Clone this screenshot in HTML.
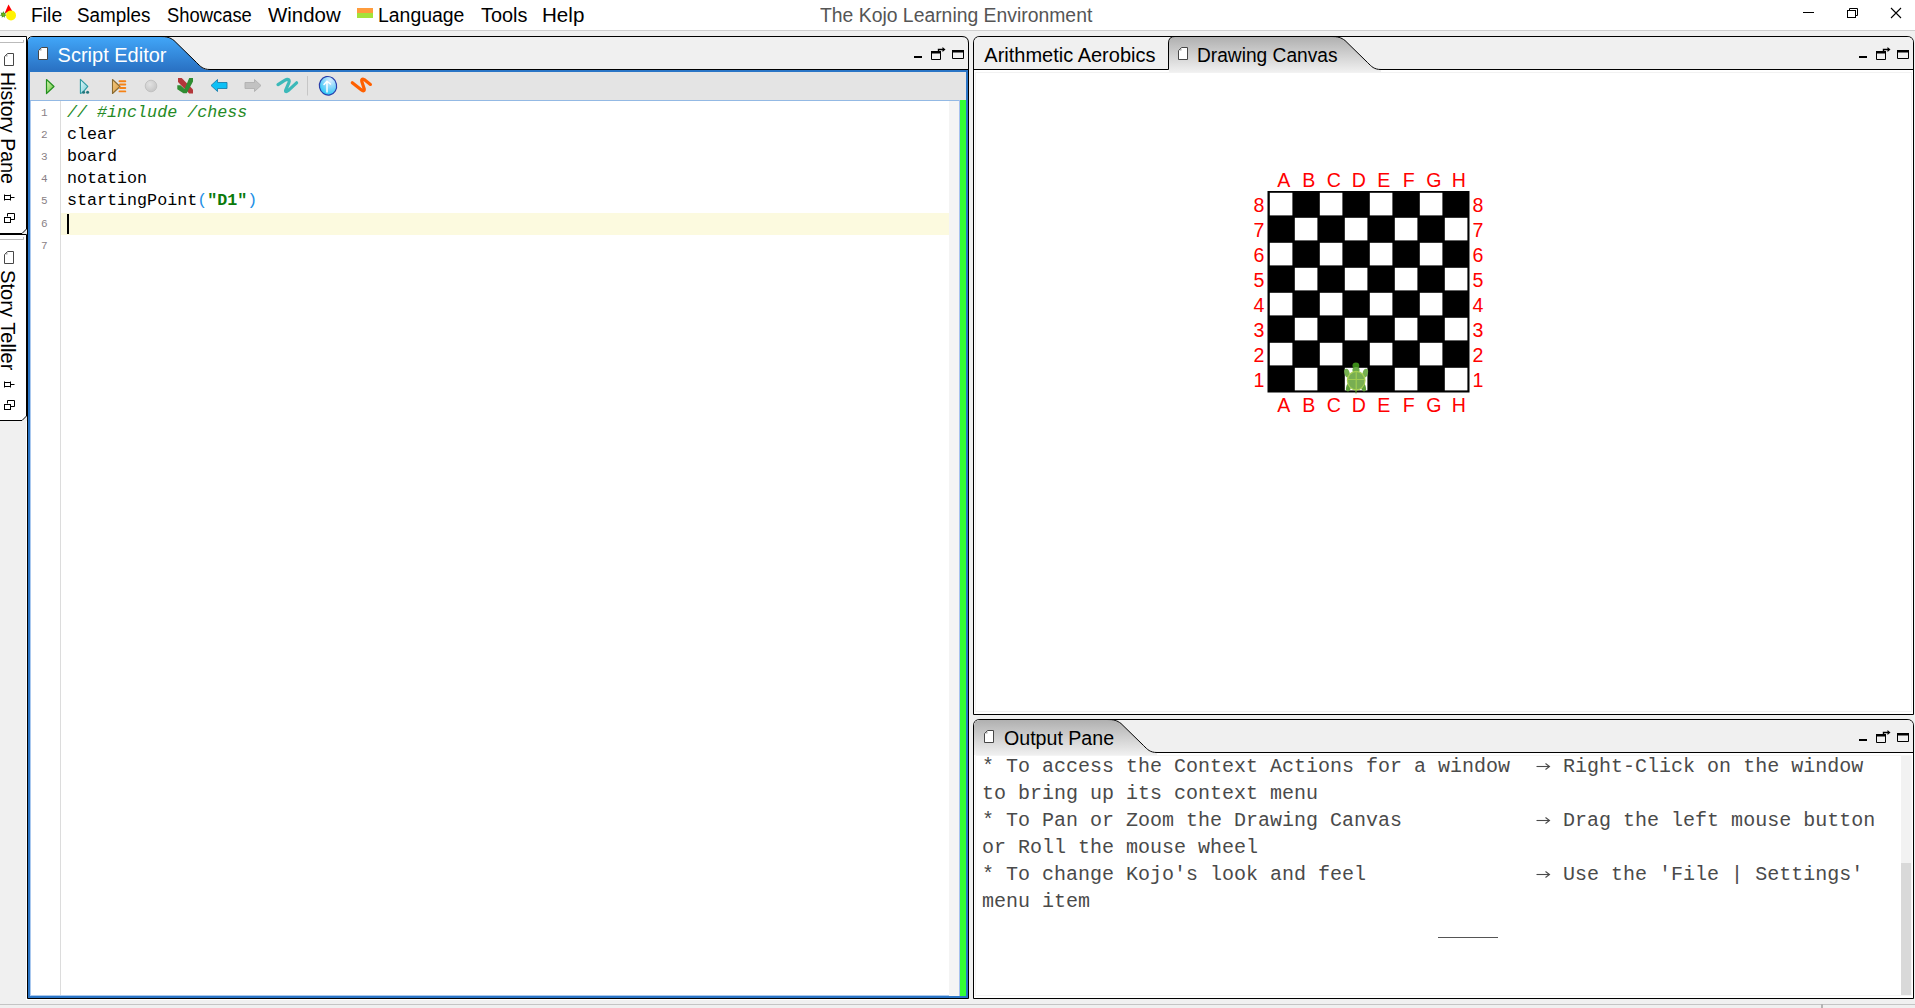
<!DOCTYPE html>
<html><head><meta charset="utf-8">
<style>
*{margin:0;padding:0;box-sizing:border-box}
html,body{width:1915px;height:1008px;overflow:hidden;background:#f0f0f0;font-family:"Liberation Sans",sans-serif;position:relative}
.a{position:absolute}
.t{position:absolute;white-space:pre;line-height:1}
.menu{font-size:20px;color:#000;top:4.8px;transform-origin:0 0}
.mono{font-family:"Liberation Mono",monospace}
.code{position:absolute;left:67px;font-family:"Liberation Mono",monospace;font-size:16.7px;white-space:pre;line-height:1;color:#000}
.ln{position:absolute;font-family:"Liberation Mono",monospace;font-size:11px;color:#8a7f86;line-height:1}
.out{position:absolute;left:982px;font-family:"Liberation Mono",monospace;font-size:20px;white-space:pre;line-height:1;color:#4a4a4a}
.arr{display:inline-block;position:relative;width:17px;height:20px;vertical-align:top}
.rot{position:absolute;transform-origin:0 0;transform:rotate(90deg);white-space:pre;line-height:1;font-size:20px;color:#000}
</style></head>
<body>
<!-- title/menu bar -->
<div class="a" style="left:0;top:0;width:1915px;height:30px;background:#fff"></div>
<div class="a" style="left:0;top:30px;width:1915px;height:1px;background:#cfcfcf"></div>
<svg class="a" style="left:0;top:0" width="18" height="24">
<polygon points="8.5,4.6 12.2,11 4.6,13.2" fill="#f00"/>
<polygon points="3.30,11.10 4.12,12.89 6.04,12.42 5.15,14.18 6.71,15.38 4.79,15.78 4.82,17.75 3.30,16.50 1.78,17.75 1.81,15.78 -0.11,15.38 1.45,14.18 0.56,12.42 2.48,12.89" fill="#3c961c"/>
<circle cx="3.4" cy="14.6" r="1.4" fill="#7ab80c"/>
<circle cx="11" cy="15.4" r="5" fill="#fff200"/>
</svg>
<div class="a" style="left:357px;top:8px;width:16px;height:5px;background:#ff9c3c"></div>
<div class="a" style="left:357px;top:13px;width:16px;height:5px;background:#a4e23a"></div>
<div class="t menu" style="left:31.4px;transform:scaleX(0.966)">File</div>
<div class="t menu" style="left:77.4px;transform:scaleX(0.943)">Samples</div>
<div class="t menu" style="left:166.7px;transform:scaleX(0.919)">Showcase</div>
<div class="t menu" style="left:268.1px;transform:scaleX(1.021)">Window</div>
<div class="t menu" style="left:377.9px;transform:scaleX(0.971)">Language</div>
<div class="t menu" style="left:481px;transform:scaleX(0.993)">Tools</div>
<div class="t menu" style="left:542.2px;transform:scaleX(1.029)">Help</div>
<div class="t menu" style="left:819.8px;color:#555;transform:scaleX(0.968)">The Kojo Learning Environment</div>
<!-- window controls -->
<svg class="a" style="left:1790px;top:0" width="125" height="30">
<line x1="13" y1="12.5" x2="24" y2="12.5" stroke="#000" stroke-width="1"/>
<rect x="57.5" y="10.5" width="8" height="7" fill="none" stroke="#000"/>
<path d="M59.5 10.5 V8.5 H67.5 V15.5 H65.5" fill="none" stroke="#000"/>
<path d="M101 8 L111 18 M111 8 L101 18" stroke="#000" stroke-width="1.1"/>
</svg>

<!-- ============ shapes layer ============ -->
<svg class="a" style="left:0;top:0" width="1915" height="1008">
<defs>
<linearGradient id="blue" gradientUnits="userSpaceOnUse" x1="0" y1="37" x2="0" y2="70">
<stop offset="0" stop-color="#41a6f8"/><stop offset="1" stop-color="#2a72c4"/>
</linearGradient>
<linearGradient id="grey" x1="0" y1="0" x2="0" y2="1">
<stop offset="0" stop-color="#b0b0b0"/><stop offset="1" stop-color="#f0f0f0"/>
</linearGradient>
</defs>
<!-- sidebar -->
<path d="M0 36 H27 V229 L22.5 233.5 H0 Z" fill="#fff"/><path d="M0 36.5 H26.5 V229 L22 233.5 H0" fill="none" stroke="#000" stroke-width="1"/>
<path d="M0 234 H27 V416 L22.5 420.5 H0 Z" fill="#fff"/><path d="M0 234.5 H26.5 V416 L22 420.5 H0" fill="none" stroke="#000" stroke-width="1"/>
<path d="M0 42.5 H23.5 V40" fill="none" stroke="#bbb"/>
<path d="M0 239.5 H23.5 V237" fill="none" stroke="#bbb"/>

<!-- script editor panel -->
<path d="M27.5 998.5 V42 Q27.5 36.5 33 36.5 H962 Q968.5 36.5 968.5 43 V998.5 Z" fill="#f0f0f0" stroke="#000" stroke-width="1"/>
<path d="M28 70 V42 Q28 37 33 37 L160 37 C167 37 170 37.5 174 40.5 L196.5 62.5 C200.5 66.5 203 70 210 70 H968 V998 H28 Z" fill="url(#blue)"/>
<path d="M160 36.5 C167 36.5 170 37.5 174 40.5 L196.5 62.5 C200.5 66.5 203 69.5 210 69.5 H968" fill="none" stroke="#000" stroke-width="1"/>
<rect x="28" y="70" width="940" height="928" fill="#2a75c6"/>
<rect x="30" y="72" width="936" height="28" fill="#e4e4e4"/>
<rect x="30" y="100" width="936" height="1" fill="#93b9e4"/>
<rect x="30" y="101" width="936" height="895" fill="#fff"/>
<rect x="60" y="101" width="1" height="895" fill="#dcdcdc"/>
<rect x="30" y="101" width="1" height="895" fill="#a9c8ee"/><rect x="30" y="995" width="930" height="1" fill="#a9c8ee"/>
<rect x="26" y="421" width="1" height="578" fill="#fff"/><rect x="26" y="999" width="944" height="1" fill="#fff"/>
<rect x="61" y="213" width="888" height="22" fill="#fcfadf"/>
<rect x="949" y="101" width="10" height="895" fill="#f4f4f4"/><rect x="959" y="100" width="1" height="896" fill="#a8c0ee"/>
<rect x="960" y="100" width="6" height="896" fill="#33ff33"/>

<!-- drawing canvas panel -->
<path d="M973.5 714.5 V43 Q973.5 36.5 980 36.5 H1907 Q1913.5 36.5 1913.5 43 V714.5 Z" fill="#fff" stroke="#000" stroke-width="1"/>
<path d="M974 69 V43 Q974 37 980 37 H1907 Q1913 37 1913 43 V69 Z" fill="#f0f0f0"/>
<path d="M1169 72 V43 Q1169 37 1175 37 L1331 37 C1338 37 1341 37.5 1345 40.5 L1367.5 62.5 C1371.5 66.5 1374 70 1381 70 V72 Z" fill="url(#grey)"/>
<path d="M974 69.5 H1168.5 V43 Q1168.5 36.5 1175 36.5 L1331 36.5 C1338 36.5 1341 37.5 1345 40.5 L1367.5 62.5 C1371.5 66.5 1374 69.5 1381 69.5 H1913" fill="none" stroke="#000" stroke-width="1"/>

<!-- output panel -->
<path d="M973.5 998.5 V726 Q973.5 719.5 980 719.5 H1907 Q1913.5 719.5 1913.5 726 V998.5 Z" fill="#fff" stroke="#000" stroke-width="1"/>
<path d="M974 752 V726 Q974 720 980 720 H1907 Q1913 720 1913 726 V752 Z" fill="#f0f0f0"/>
<path d="M974 755 V726 Q974 720 980 720 L1107 720 C1114 720 1117 720.5 1121 723.5 L1143.5 745.5 C1147.5 749.5 1150 753 1157 753 V755 Z" fill="url(#grey)"/>
<path d="M1107 719.5 C1114 719.5 1117 720.5 1121 723.5 L1143.5 745.5 C1147.5 749.5 1150 752.5 1157 752.5 H1913" fill="none" stroke="#000" stroke-width="1"/>
<rect x="1901" y="755" width="10" height="108" fill="#f2f2f2"/>
<rect x="1901" y="863" width="10" height="133" fill="#d9d9d9"/>

<rect x="975.5" y="72.5" width="936" height="639" fill="none" stroke="#f2f2f2"/>
<rect x="975.5" y="755.5" width="936" height="240" fill="none" stroke="#f4f4f4"/>
<!-- status bar -->
<rect x="0" y="1004" width="1915" height="1" fill="#c4c4c4"/>
<rect x="1821" y="1004" width="2" height="4" fill="#b4b4b4"/>
</svg>


<!-- ============ text & icons layer ============ -->
<svg class="a" style="left:0;top:0" width="400" height="100">
<defs>
<linearGradient id="gr1" x1="0" y1="0" x2="1" y2="1"><stop offset="0" stop-color="#dcf7b8"/><stop offset="1" stop-color="#5cc038"/></linearGradient>
<linearGradient id="tl1" x1="0" y1="0" x2="1" y2="1"><stop offset="0" stop-color="#e0f6f8"/><stop offset="1" stop-color="#7ccfd8"/></linearGradient>
<linearGradient id="or1" x1="0" y1="0" x2="1" y2="1"><stop offset="0" stop-color="#f6cc80"/><stop offset="1" stop-color="#d89a48"/></linearGradient>
<radialGradient id="bb1" cx="0.7" cy="0.25" r="0.9"><stop offset="0" stop-color="#d8ecff"/><stop offset="0.5" stop-color="#7ad4fa"/><stop offset="1" stop-color="#10c4f6"/></radialGradient>
<radialGradient id="st1" cx="0.4" cy="0.35" r="0.7"><stop offset="0" stop-color="#e2e2e2"/><stop offset="1" stop-color="#c4c4c4"/></radialGradient>
</defs>
<!-- run -->
<path d="M46.5 79.5 L54 86.5 L46.5 93.5 Z" fill="url(#gr1)" stroke="#23901e" stroke-width="1.2" stroke-linejoin="round"/>
<!-- run worksheet -->
<path d="M80.4 79.3 L87.8 86.3 L82.6 92.6 L80.4 93.4 Z" fill="url(#tl1)" stroke="#2a9aa2" stroke-width="1.1" stroke-linejoin="round"/>
<circle cx="83.6" cy="92.2" r="1.5" fill="#23767c"/><circle cx="87.6" cy="92.2" r="1.5" fill="#23767c"/>
<!-- trace -->
<path d="M112.5 79.5 L120 86.5 L112.5 93.5 Z" fill="url(#or1)" stroke="#8a6a30" stroke-width="1.1" stroke-linejoin="round"/>
<g stroke="#f58216" stroke-width="1.9" stroke-linecap="round"><path d="M119.5 81.2 H125.3 M120 84.5 H125.3 M120 88 H125.3 M119.5 91.4 H125.3"/></g>
<!-- stop -->
<circle cx="151" cy="86" r="5.8" fill="url(#st1)" stroke="#bdbdbd" stroke-width="0.8"/>
<!-- check/cross -->
<polygon points="178,78.1 181.7,78.1 193,89.5 193,93.5 189.2,93.5 178,82" fill="#b3363a"/>
<polygon points="177.3,85.2 180.5,85.2 184.6,89 189.2,78.1 193,78.1 193,81.5 186.7,93.3 183.4,93.3 177.3,89.2" fill="#2f8d32"/>
<!-- back arrow -->
<path d="M211 85.5 L217.5 79.5 V82.5 H227 V88.5 H217.5 V91.5 Z" fill="#0cc0f6" stroke="#1a7fae" stroke-width="0.9" stroke-linejoin="round"/>
<!-- fwd arrow -->
<path d="M261 85.5 L254.5 79.5 V82.5 H245 V88.5 H254.5 V91.5 Z" fill="#c2c2c2" stroke="#b0b0b0" stroke-width="0.9" stroke-linejoin="round"/>
<!-- teal squiggle -->
<path d="M278 84.6 C282 82 285.5 79.6 287.3 79.4 C289.3 79.3 289.6 80.8 288.8 82.8 L285.8 89.8 C285 91.8 286.2 92.2 288.2 90.6 L296.6 82.8" fill="none" stroke="#3cb9b9" stroke-width="3.2" stroke-linecap="round" stroke-linejoin="round"/>
<rect x="307" y="76" width="1" height="19.5" fill="#c6c6c6"/>
<!-- blue ball -->
<ellipse cx="328" cy="85.8" rx="8.6" ry="9.3" fill="url(#bb1)" stroke="#2a3eaa" stroke-width="1.2" transform="rotate(-12 328 85.8)"/>
<path d="M327 92 V81.5 M324 84.5 L327 81.2 L330.5 84" fill="none" stroke="#fff" stroke-width="1.5" stroke-linecap="round"/>
<!-- orange squiggle -->
<path d="M352.3 82.8 L361.2 89.8 C363.2 91.4 364.6 91 364.2 88.8 L361.8 81.6 C361.2 79.6 362.2 78.6 364.2 79.6 L370.4 84.4" fill="none" stroke="#ff6000" stroke-width="3.2" stroke-linecap="round" stroke-linejoin="round"/>
</svg>
<svg class="a" style="left:0;top:0" width="1915" height="1008">
<rect x="1267.5" y="191" width="202" height="201.5" fill="#000"/>
<rect x="1269.8" y="192.8" width="22.6" height="22.6" fill="#fff"/>
<rect x="1269.8" y="242.8" width="22.6" height="22.6" fill="#fff"/>
<rect x="1269.8" y="292.8" width="22.6" height="22.6" fill="#fff"/>
<rect x="1269.8" y="342.8" width="22.6" height="22.6" fill="#fff"/>
<rect x="1294.8" y="217.8" width="22.6" height="22.6" fill="#fff"/>
<rect x="1294.8" y="267.8" width="22.6" height="22.6" fill="#fff"/>
<rect x="1294.8" y="317.8" width="22.6" height="22.6" fill="#fff"/>
<rect x="1294.8" y="367.8" width="22.6" height="22.6" fill="#fff"/>
<rect x="1319.8" y="192.8" width="22.6" height="22.6" fill="#fff"/>
<rect x="1319.8" y="242.8" width="22.6" height="22.6" fill="#fff"/>
<rect x="1319.8" y="292.8" width="22.6" height="22.6" fill="#fff"/>
<rect x="1319.8" y="342.8" width="22.6" height="22.6" fill="#fff"/>
<rect x="1344.8" y="217.8" width="22.6" height="22.6" fill="#fff"/>
<rect x="1344.8" y="267.8" width="22.6" height="22.6" fill="#fff"/>
<rect x="1344.8" y="317.8" width="22.6" height="22.6" fill="#fff"/>
<rect x="1344.8" y="367.8" width="22.6" height="22.6" fill="#fff"/>
<rect x="1369.8" y="192.8" width="22.6" height="22.6" fill="#fff"/>
<rect x="1369.8" y="242.8" width="22.6" height="22.6" fill="#fff"/>
<rect x="1369.8" y="292.8" width="22.6" height="22.6" fill="#fff"/>
<rect x="1369.8" y="342.8" width="22.6" height="22.6" fill="#fff"/>
<rect x="1394.8" y="217.8" width="22.6" height="22.6" fill="#fff"/>
<rect x="1394.8" y="267.8" width="22.6" height="22.6" fill="#fff"/>
<rect x="1394.8" y="317.8" width="22.6" height="22.6" fill="#fff"/>
<rect x="1394.8" y="367.8" width="22.6" height="22.6" fill="#fff"/>
<rect x="1419.8" y="192.8" width="22.6" height="22.6" fill="#fff"/>
<rect x="1419.8" y="242.8" width="22.6" height="22.6" fill="#fff"/>
<rect x="1419.8" y="292.8" width="22.6" height="22.6" fill="#fff"/>
<rect x="1419.8" y="342.8" width="22.6" height="22.6" fill="#fff"/>
<rect x="1444.8" y="217.8" width="22.6" height="22.6" fill="#fff"/>
<rect x="1444.8" y="267.8" width="22.6" height="22.6" fill="#fff"/>
<rect x="1444.8" y="317.8" width="22.6" height="22.6" fill="#fff"/>
<rect x="1444.8" y="367.8" width="22.6" height="22.6" fill="#fff"/>
<g font-family="Liberation Sans" font-size="19.6" fill="#f00" text-anchor="middle">
<text x="1283.8" y="186.8">A</text>
<text x="1283.8" y="412">A</text>
<text x="1308.8" y="186.8">B</text>
<text x="1308.8" y="412">B</text>
<text x="1333.8" y="186.8">C</text>
<text x="1333.8" y="412">C</text>
<text x="1358.8" y="186.8">D</text>
<text x="1358.8" y="412">D</text>
<text x="1383.8" y="186.8">E</text>
<text x="1383.8" y="412">E</text>
<text x="1408.8" y="186.8">F</text>
<text x="1408.8" y="412">F</text>
<text x="1433.8" y="186.8">G</text>
<text x="1433.8" y="412">G</text>
<text x="1458.8" y="186.8">H</text>
<text x="1458.8" y="412">H</text>
<text x="1259" y="212.1">8</text>
<text x="1478" y="212.1">8</text>
<text x="1259" y="237.1">7</text>
<text x="1478" y="237.1">7</text>
<text x="1259" y="262.1">6</text>
<text x="1478" y="262.1">6</text>
<text x="1259" y="287.1">5</text>
<text x="1478" y="287.1">5</text>
<text x="1259" y="312.1">4</text>
<text x="1478" y="312.1">4</text>
<text x="1259" y="337.1">3</text>
<text x="1478" y="337.1">3</text>
<text x="1259" y="362.1">2</text>
<text x="1478" y="362.1">2</text>
<text x="1259" y="387.1">1</text>
<text x="1478" y="387.1">1</text>
</g>
<g>
<ellipse cx="1355.9" cy="365.6" rx="3.4" ry="3.2" fill="#3b8a18"/>
<ellipse cx="1356" cy="370" rx="3.6" ry="3" fill="#6aaa48"/>
<ellipse cx="1347" cy="373" rx="2.6" ry="4.4" fill="#76b050" transform="rotate(-15 1347 373)"/>
<ellipse cx="1365.3" cy="373" rx="2.6" ry="4.4" fill="#76b050" transform="rotate(15 1365.3 373)"/>
<ellipse cx="1348.5" cy="387.5" rx="2.4" ry="4" fill="#5e9e3a" transform="rotate(15 1348.5 387.5)"/>
<ellipse cx="1363.5" cy="387.5" rx="2.4" ry="4" fill="#5e9e3a" transform="rotate(-15 1363.5 387.5)"/>
<path d="M1355 390 L1357 390 L1356 394.5 Z" fill="#4a9020"/>
<ellipse cx="1356.2" cy="380.6" rx="8.8" ry="9.3" fill="#78ae52" stroke="#a6cf52" stroke-width="1.2"/>
<path d="M1356.2 372 V389.5 M1347.8 379.5 H1364.6" stroke="#9fcc50" stroke-width="1.2"/>
</g>
</svg>
<!-- sidebar contents -->
<svg class="a" style="left:0;top:0" width="30" height="430">
<path d="M4.5 56.5 L7.5 53.5 H13.5 V65.5 H4.5 Z" fill="#fff" stroke="#474747"/><path d="M5.0 56.5 L7.5 54.0 V56.5 Z" fill="#a4a4a4"/>
<path d="M4.5 254.5 L7.5 251.5 H13.5 V263.5 H4.5 Z" fill="#fff" stroke="#474747"/><path d="M5.0 254.5 L7.5 252.0 V254.5 Z" fill="#a4a4a4"/>
<!-- pin icons -->
<g fill="none" stroke="#000" stroke-width="1">
<path d="M4.5 194.5 V200.5 M10.5 194.5 V200.5 M4.5 195.5 H10.5 M4.5 199.5 H10.5 M10.5 197.5 H14.5"/>
<path d="M4.5 381.5 V387.5 M10.5 381.5 V387.5 M4.5 382.5 H10.5 M4.5 386.5 H10.5 M10.5 384.5 H14.5"/>
</g>
<g fill="none" stroke="#000" stroke-width="1">
<rect x="4.5" y="217.5" width="6" height="5"/><path d="M7.5 216.5 V213.5 H14.5 V219.5 H11"/>
<rect x="4.5" y="404.5" width="6" height="5"/><path d="M7.5 403.5 V400.5 H14.5 V406.5 H11"/>
</g>
</svg>
<div class="rot" style="left:18.2px;top:72px;transform:rotate(90deg) scaleX(0.978)">History Pane</div>
<div class="rot" style="left:18.2px;top:270.1px;transform:rotate(90deg) scaleX(1.007)">Story Teller</div>

<!-- script editor tab -->
<svg class="a" style="left:0;top:0" width="60" height="70">
<path d="M38.5 50.5 L41.5 47.5 H47.5 V59.5 H38.5 Z" fill="#fff" stroke="#474747"/><path d="M39.0 50.5 L41.5 48.0 V50.5 Z" fill="#a4a4a4"/>
</svg>
<div class="t" style="left:57.6px;top:45px;font-size:20px;color:#fff">Script Editor</div>

<!-- panel controls -->
<svg class="a" style="left:0;top:0" width="1915" height="1008">
<g id="pc">
<rect x="914" y="56" width="8" height="2" fill="#000"/>
<path d="M931.5 59.5 V51.5 H940.5 V59.5 Z" fill="#f0f0f0" stroke="#000"/>
<rect x="931" y="51" width="10" height="2.5" fill="#000"/>
<path d="M938.5 51 V49.5 H943" fill="none" stroke="#000" stroke-width="1.4"/>
<path d="M942.5 47 L945.5 49.5 L942.5 52 Z" fill="#000"/>
<path d="M952.5 58.5 V50.5 H963.5 V58.5 Z" fill="#f0f0f0" stroke="#000"/>
<rect x="952" y="50" width="12" height="2.5" fill="#000"/>
</g>
<use href="#pc" x="945" y="0"/>
<use href="#pc" x="945" y="683"/>
</svg>

<!-- right tabs -->
<div class="t" style="left:984.3px;top:44.6px;font-size:20px;color:#000">Arithmetic Aerobics</div>
<svg class="a" style="left:0;top:0" width="1400" height="760">
<path d="M1178.5 50.5 L1181.5 47.5 H1187.5 V59.5 H1178.5 Z" fill="#fff" stroke="#474747"/><path d="M1179.0 50.5 L1181.5 48.0 V50.5 Z" fill="#a4a4a4"/>
<path d="M984.5 733.5 L987.5 730.5 H993.5 V742.5 H984.5 Z" fill="#fff" stroke="#474747"/><path d="M985.0 733.5 L987.5 731.0 V733.5 Z" fill="#a4a4a4"/>
</svg>
<div class="t" style="left:1196.9px;top:45px;font-size:20px;color:#000;transform-origin:0 0;transform:scaleX(0.958)">Drawing Canvas</div>
<div class="t" style="left:1003.6px;top:728.2px;font-size:20px;color:#000;transform-origin:0 0;transform:scaleX(0.98)">Output Pane</div>

<!-- line numbers -->
<div class="ln" style="left:41px;top:108px">1</div>
<div class="ln" style="left:41px;top:130px">2</div>
<div class="ln" style="left:41px;top:152px">3</div>
<div class="ln" style="left:41px;top:174px">4</div>
<div class="ln" style="left:41px;top:196px">5</div>
<div class="ln" style="left:41px;top:219px">6</div>
<div class="ln" style="left:41px;top:241px">7</div>
<!-- code -->
<div class="code" style="top:105px;color:#258a25;font-style:italic">// #include /chess</div>
<div class="code" style="top:127px">clear</div>
<div class="code" style="top:149px">board</div>
<div class="code" style="top:171px">notation</div>
<div class="code" style="top:193px">startingPoint<span style="color:#1e90e6">(</span><b style="color:#0a7a0a">"D1"</b><span style="color:#1e90e6">)</span></div>
<div class="a" style="left:67px;top:214px;width:2px;height:20px;background:#000"></div>

<!-- output text -->
<div class="out" style="top:757px">* To access the Context Actions for a window  <span class="arr"><svg width="17" height="20" style="position:absolute;left:0;top:0"><path d="M2.5 9.5 H15" stroke="#4a4a4a" stroke-width="1.1"/><path d="M11.5 6.5 L15.5 9.5 L11.5 12.5" fill="none" stroke="#4a4a4a" stroke-width="1.1"/></svg></span> Right-Click on the window</div>
<div class="out" style="top:784px">to bring up its context menu</div>
<div class="out" style="top:811px">* To Pan or Zoom the Drawing Canvas           <span class="arr"><svg width="17" height="20" style="position:absolute;left:0;top:0"><path d="M2.5 9.5 H15" stroke="#4a4a4a" stroke-width="1.1"/><path d="M11.5 6.5 L15.5 9.5 L11.5 12.5" fill="none" stroke="#4a4a4a" stroke-width="1.1"/></svg></span> Drag the left mouse button</div>
<div class="out" style="top:838px">or Roll the mouse wheel</div>
<div class="out" style="top:865px">* To change Kojo's look and feel              <span class="arr"><svg width="17" height="20" style="position:absolute;left:0;top:0"><path d="M2.5 9.5 H15" stroke="#4a4a4a" stroke-width="1.1"/><path d="M11.5 6.5 L15.5 9.5 L11.5 12.5" fill="none" stroke="#4a4a4a" stroke-width="1.1"/></svg></span> Use the 'File | Settings'</div>
<div class="out" style="top:892px">menu item</div>
<div class="a" style="left:1438px;top:937px;width:60px;height:1px;background:#555"></div>

</body></html>
